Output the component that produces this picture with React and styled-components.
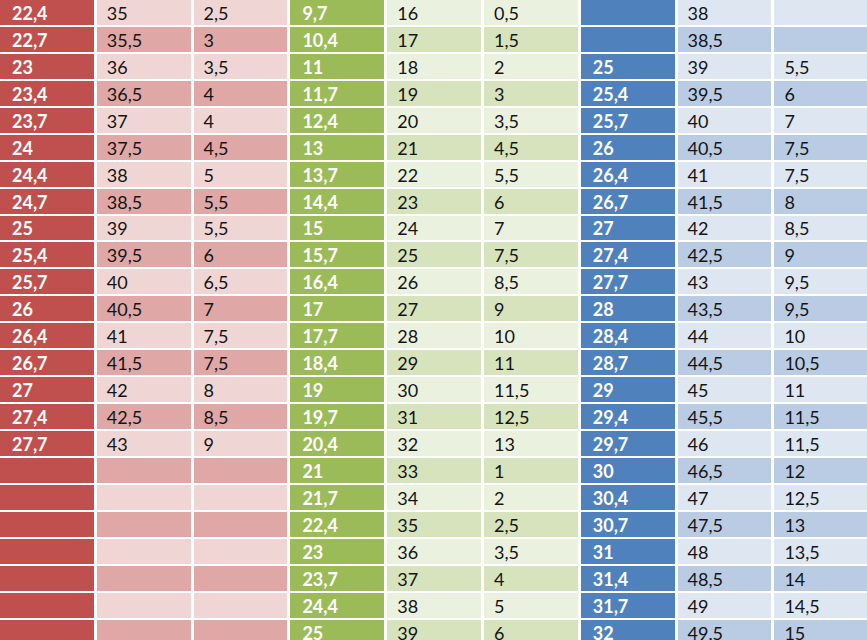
import styled, { createGlobalStyle } from 'styled-components';

const Global = createGlobalStyle`
  html, body {
    margin: 0;
    padding: 0;
    background: #ffffff;
    overflow: hidden;
  }
  body {
    font-family: Lato, "Open Sans", "Liberation Sans", sans-serif;
  }
`

// excel-ish palettes: head column, light band, dark band
const palettes = {
  red: { head: '#c0504d', light: '#efd6d5', dark: '#dfa8a7' },
  green: { head: '#9bbb59', light: '#ebf1df', dark: '#d6e3bc' },
  blue: { head: '#4f81bd', light: '#dde6f1', dark: '#b9cce4' },
}

const Sheet = styled.div`
  display: flex;
  gap: 3px;
  width: 870px;
  height: 640px;
  overflow: hidden;
`

const Section = styled.div`
  display: grid;
  grid-template-columns: repeat(3, 93.8px);
  grid-auto-rows: 24.94px;
  column-gap: 3px;
  row-gap: 2px;
`

const Cell = styled.div`
  display: flex;
  align-items: center;
  padding-left: ${props => props.$head ? '12px' : '10px'};
  padding-top: 1px;
  font-size: 18px;
  font-weight: ${props => props.$head ? 700 : 400};
  color: ${props => props.$head ? '#ffffff' : '#141414'};
  background: ${props => {
    let p = palettes[props.$color]
    if (props.$head) return p.head
    return props.$odd ? p.dark : p.light
  }};
  white-space: nowrap;
`

const red = [
  ['22,4', '35', '2,5'], ['22,7', '35,5', '3'], ['23', '36', '3,5'], ['23,4', '36,5', '4'],
  ['23,7', '37', '4'], ['24', '37,5', '4,5'], ['24,4', '38', '5'], ['24,7', '38,5', '5,5'],
  ['25', '39', '5,5'], ['25,4', '39,5', '6'], ['25,7', '40', '6,5'], ['26', '40,5', '7'],
  ['26,4', '41', '7,5'], ['26,7', '41,5', '7,5'], ['27', '42', '8'], ['27,4', '42,5', '8,5'],
  ['27,7', '43', '9'], ['', '', ''], ['', '', ''], ['', '', ''], ['', '', ''], ['', '', ''],
  ['', '', ''], ['', '', ''],
]

const green = [
  ['9,7', '16', '0,5'], ['10,4', '17', '1,5'], ['11', '18', '2'], ['11,7', '19', '3'],
  ['12,4', '20', '3,5'], ['13', '21', '4,5'], ['13,7', '22', '5,5'], ['14,4', '23', '6'],
  ['15', '24', '7'], ['15,7', '25', '7,5'], ['16,4', '26', '8,5'], ['17', '27', '9'],
  ['17,7', '28', '10'], ['18,4', '29', '11'], ['19', '30', '11,5'], ['19,7', '31', '12,5'],
  ['20,4', '32', '13'], ['21', '33', '1'], ['21,7', '34', '2'], ['22,4', '35', '2,5'],
  ['23', '36', '3,5'], ['23,7', '37', '4'], ['24,4', '38', '5'], ['25', '39', '6'],
]

const blue = [
  ['', '38', ''], ['', '38,5', ''], ['25', '39', '5,5'], ['25,4', '39,5', '6'],
  ['25,7', '40', '7'], ['26', '40,5', '7,5'], ['26,4', '41', '7,5'], ['26,7', '41,5', '8'],
  ['27', '42', '8,5'], ['27,4', '42,5', '9'], ['27,7', '43', '9,5'], ['28', '43,5', '9,5'],
  ['28,4', '44', '10'], ['28,7', '44,5', '10,5'], ['29', '45', '11'], ['29,4', '45,5', '11,5'],
  ['29,7', '46', '11,5'], ['30', '46,5', '12'], ['30,4', '47', '12,5'], ['30,7', '47,5', '13'],
  ['31', '48', '13,5'], ['31,4', '48,5', '14'], ['31,7', '49', '14,5'], ['32', '49,5', '15'],
]

function SizeBlock({ rows, color }) {
  return (
    <Section>
      {rows.map((row, i) =>
        row.map((val, j) => (
          <Cell key={i + '-' + j} $color={color} $head={j == 0} $odd={i % 2 == 1}>
            {val}
          </Cell>
        ))
      )}
    </Section>
  )
}

function App() {
  return (
    <>
      <Global />
      <Sheet>
        <SizeBlock rows={red} color="red" />
        <SizeBlock rows={green} color="green" />
        <SizeBlock rows={blue} color="blue" />
      </Sheet>
    </>
  )
}

export default App
